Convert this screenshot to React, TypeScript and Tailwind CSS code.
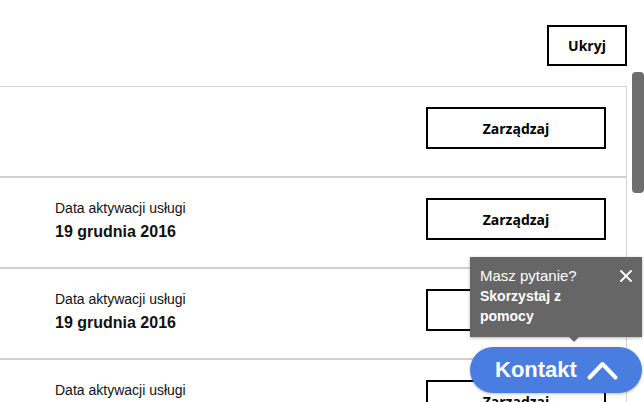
import { X } from "lucide-react";

const rows = [
  { date: null },
  { date: "19 grudnia 2016" },
  { date: "19 grudnia 2016" },
  { date: "19 grudnia 2016" },
];

function ManageButton() {
  return (
    <button className="w-[180px] h-[42px] border-2 border-black bg-white text-[14px] font-bold text-black [font-family:'Open_Sans',sans-serif]">
      Zarządzaj
    </button>
  );
}

export default function App() {
  return (
    <div className="relative w-[644px] h-[402px] overflow-hidden bg-white [font-family:'Liberation_Sans',Arial,sans-serif]">
      <div className="w-[627px]">
        <div className="flex justify-end pt-[25px] pb-[20px]">
          <button className="w-[80px] h-[41px] border-2 border-black bg-white text-[14px] font-bold text-black [font-family:'Open_Sans',sans-serif]">
            Ukryj
          </button>
        </div>

        <div className="border-t border-r border-[#d4d4d4]">
          {rows.map((row, i) => (
            <div
              key={i}
              className="flex justify-between h-[91px] border-b-2 border-[#d0d0d0] pl-[55px] pr-[20px]"
            >
              <div className="pt-[22px]">
                {row.date && (
                  <>
                    <div className="text-[14px] leading-[16px] text-[#111]">Data aktywacji usługi</div>
                    <div className="mt-[7px] text-[16px] leading-[18px] font-bold text-[#111]">{row.date}</div>
                  </>
                )}
              </div>
              <div className="pt-[20px]">
                <ManageButton />
              </div>
            </div>
          ))}
        </div>
      </div>

      {/* scrollbar thumb */}
      <div className="absolute left-[632px] top-[72px] w-[12px] h-[121px] rounded-[4px] bg-[#6e6e6e]" />

      {/* help tooltip */}
      <div className="absolute left-[470px] top-[257px] w-[172px] h-[80px] bg-[#666666] pl-[10px] pt-[9px] text-white shadow-[0_1px_3px_rgba(0,0,0,0.3)]">
        <div className="text-[15px] leading-[20px]">Masz pytanie?</div>
        <div className="w-[110px] text-[14px] leading-[20px] font-bold">Skorzystaj z pomocy</div>
        <X className="absolute right-[6px] top-[9px] w-[20px] h-[20px]" strokeWidth={2.2} />
        <div className="absolute left-[99px] top-[80px] w-0 h-0 border-l-[5px] border-r-[5px] border-t-[5px] border-l-transparent border-r-transparent border-t-[#666666]" />
      </div>

      {/* contact button */}
      <button className="absolute left-[470px] top-[347px] w-[172px] h-[46px] rounded-full bg-[#4a7de0] flex items-center pl-[25px] gap-[10px] text-white shadow-[0_1px_3px_rgba(0,0,0,0.25)]">
        <span className="text-[22px] font-bold leading-none">Kontakt</span>
        <svg width="31" height="20" viewBox="0 0 31 20" fill="none">
          <path d="M2.5 17.5 L15.5 4 L28.5 17.5" stroke="white" strokeWidth="4" strokeLinecap="round" strokeLinejoin="round" />
        </svg>
      </button>
    </div>
  );
}
